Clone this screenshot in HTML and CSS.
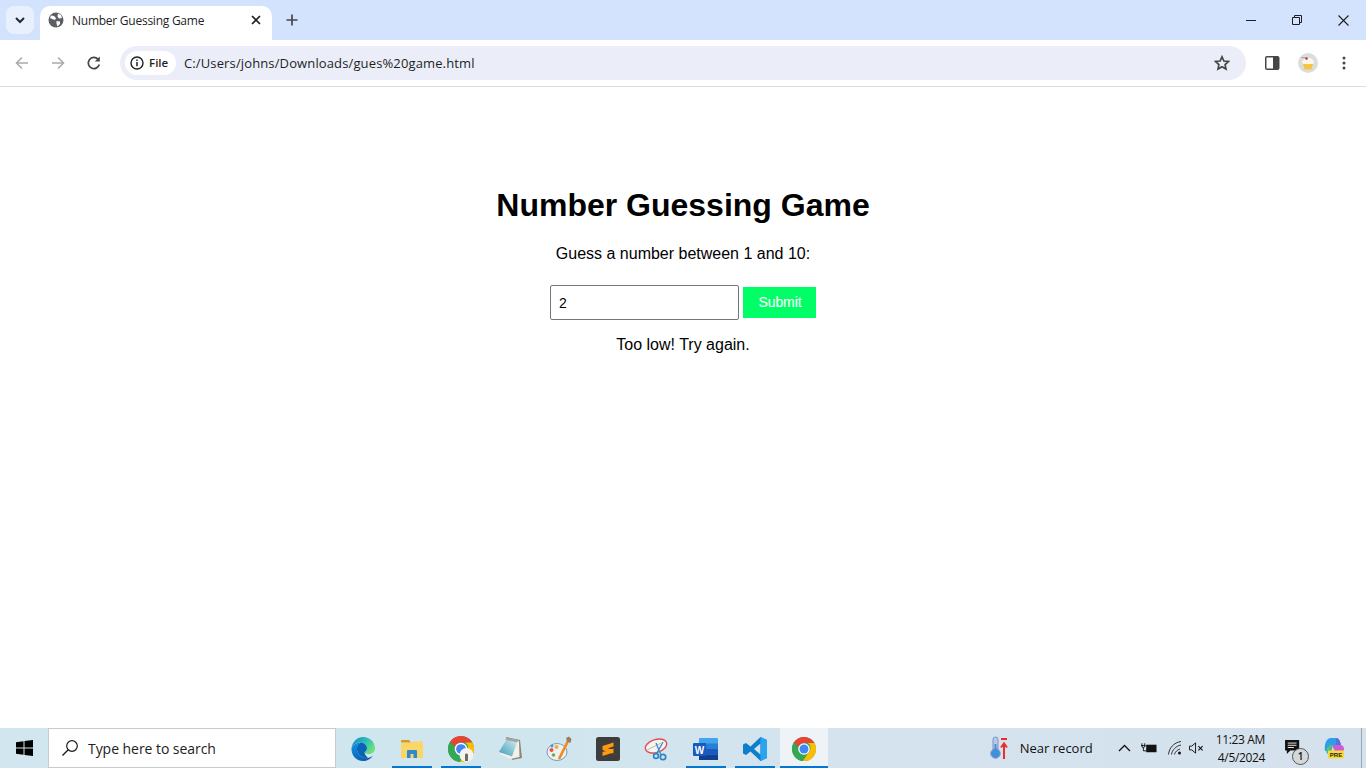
FILE: index.html
```html
<!DOCTYPE html>
<html lang="en">
<head>
<meta charset="utf-8">
<title>Number Guessing Game</title>
<link rel="stylesheet" href="styles.css">
</head>
<body>
<header class="chrome">
  <div class="tabstrip">
    <button class="tabsearch"><svg width="12" height="12" viewBox="0 0 12 12"><path d="M2 4l4 4 4-4" fill="none" stroke="#1f2a3a" stroke-width="2"/></svg></button>
    <div class="tab">
      <svg class="favicon" width="16" height="16" viewBox="0 0 16 16"><circle cx="8" cy="8" r="7.500" fill="#5b5e63"/><path d="M3 3.500l3 .5 2 2-1 2-3-1-2-1zM10 1.500l3 1.500 1 3-3 .5-1.500-2zM8.500 9l3.500 .5 0 2.500-2.500 2.500-1-3z" fill="#fff"/></svg>
      <span class="tabtitle">Number Guessing Game</span>
      <svg class="tabclose" width="10" height="10" viewBox="0 0 10 10"><path d="M1 1l8 8M9 1l-8 8" stroke="#202124" stroke-width="1.700"/></svg>
    </div>
    <svg class="newtab" width="12" height="12" viewBox="0 0 12 12"><path d="M6 .5v11M.5 6h11" stroke="#444746" stroke-width="1.700"/></svg>
    <div class="wincontrols">
      <svg width="10" height="10" viewBox="0 0 10 10"><path d="M0 5.500h10" stroke="#1f1f1f"/></svg>
      <svg width="10" height="10" viewBox="0 0 10 10"><path d="M.5 2.500h7v7h-7zM2.500 2.500v-2h7v7h-2" fill="none" stroke="#1f1f1f"/></svg>
      <svg width="11" height="11" viewBox="0 0 11 11"><path d="M.5 .5l10 10M10.500 .5l-10 10" stroke="#1f1f1f" stroke-width="1.100"/></svg>
    </div>
  </div>
  <div class="toolbar">
    <div class="navs">
      <svg width="16" height="16" viewBox="0 0 16 16"><path d="M14 8H3M8 2.500L2.500 8 8 13.500" fill="none" stroke="#a9abad" stroke-width="1.600"/></svg>
      <svg width="16" height="16" viewBox="0 0 16 16"><path d="M2 8h11M8 2.500L13.500 8 8 13.500" fill="none" stroke="#a9abad" stroke-width="1.600"/></svg>
      <svg width="16" height="16" viewBox="0 0 16 16"><path d="M13.300 9.500A5.600 5.600 0 1 1 12 4.200" fill="none" stroke="#444746" stroke-width="1.700"/><path d="M13.800 1.500v5h-5z" fill="#444746"/></svg>
    </div>
    <div class="omnibox">
      <div class="chip">
        <svg width="14" height="14" viewBox="0 0 14 14"><circle cx="7" cy="7" r="6" fill="none" stroke="#202124" stroke-width="1.400"/><path d="M7 6v4.200M7 3.500v1.500" stroke="#202124" stroke-width="1.500"/></svg>
        <span>File</span>
      </div>
      <span class="url">C:/Users/johns/Downloads/gues%20game.html</span>
      <svg class="star" width="16" height="16" viewBox="0 0 16 16"><path d="M8 1.800l1.900 4.200 4.600.5-3.400 3.100.9 4.500L8 11.800l-4 2.300.9-4.500L1.500 6.500 6.100 6z" fill="none" stroke="#444746" stroke-width="1.700"/></svg>
    </div>
    <div class="tools">
      <svg width="16" height="16" viewBox="0 0 16 16"><rect x="1" y="1" width="14.500" height="14" rx="2" fill="#444746"/><rect x="2.500" y="2.500" width="6.500" height="11" fill="#fff"/></svg>
      <svg class="avatar" width="20" height="20" viewBox="0 0 20 20"><circle cx="10" cy="10" r="10" fill="#dcdcdc"/><path d="M5 11h10l-1.500 5.500h-7z" fill="#f4c445"/><path d="M4 10c0-3 2.500-5 6-5s6 2 6 5c0 1.500-12 1.500-12 0z" fill="#fbf6e6"/><circle cx="8.500" cy="5.500" r="1.200" fill="#b3263a"/><path d="M3.500 4.500l4 .5" stroke="#777" stroke-width=".6"/></svg>
      <svg class="menu" width="4" height="14" viewBox="0 0 4 14"><circle cx="2" cy="2" r="1.500" fill="#444746"/><circle cx="2" cy="7" r="1.500" fill="#444746"/><circle cx="2" cy="12" r="1.500" fill="#444746"/></svg>
    </div>
  </div>
</header>

<main class="page">
  <h1>Number Guessing Game</h1>
  <p class="prompt">Guess a number between 1 and 10:</p>
  <form class="guess">
    <input class="guess-input" type="text" value="2">
    <button class="guess-submit" type="button">Submit</button>
  </form>
  <p class="result">Too low! Try again.</p>
</main>

<footer class="taskbar">
  <svg class="start" width="17" height="16" viewBox="0 0 17 16"><path d="M0 2.300L7.500 1.200v6.300H0zM8.500 1L17 0v7.500H8.500zM0 8.500h7.500v6.300L0 13.700zM8.500 8.500H17V16l-8.500-1.100z" fill="#000"/></svg>
  <div class="search">
    <svg width="18" height="18" viewBox="0 0 18 18"><circle cx="11" cy="7" r="5.300" fill="none" stroke="#1a1a1a" stroke-width="1.200"/><path d="M7.200 10.800L1.500 16.500" stroke="#1a1a1a" stroke-width="1.300"/></svg>
    <span>Type here to search</span>
  </div>
  <div class="apps">
    <div class="app">
      <svg width="24" height="24" viewBox="0 0 24 24"><defs><linearGradient id="edgeTop" x1="0" y1="0" x2="1" y2=".6"><stop offset="0" stop-color="#0f7fc6"/><stop offset=".55" stop-color="#2cc0b8"/><stop offset="1" stop-color="#6fe07a"/></linearGradient><linearGradient id="edgeLow" x1="0" y1="0" x2=".7" y2="1"><stop offset="0" stop-color="#1192e3"/><stop offset="1" stop-color="#0a5bb0"/></linearGradient></defs><path d="M.5 11C1.500 4.500 6.500 0 12 0c7 0 12 5 12 11.500 0 3.500-3 5.500-6.500 5.500-2.500 0-4-1-4-2 1.500-.5 2.500-2 2.500-4 0-3-3-5.500-6.500-5.500-4 0-7.500 2.500-9 5.500z" fill="url(#edgeTop)"/><path d="M.5 11C2 8 5.500 5.500 9.500 5.500 6.500 7 5.500 10 6 13c1 5.500 6 9 11 8 2-.4 3.500-1.200 5-2.500-2 3.500-6 5.500-10 5.500C5 24 0 18 .5 11z" fill="url(#edgeLow)"/><path d="M9.500 5.500c3.500 0 6.500 2.500 6.500 5.500 0 2-1 3.500-2.500 4 0 2 1.500 4 3.500 6-5 1-10-2.500-11-8-.5-3 .5-6 3.500-7.500z" fill="#0b63b5"/></svg>
    </div>
    <div class="app active-line">
      <svg width="22" height="20" viewBox="0 0 22 20"><path d="M0 2a1 1 0 0 1 1-1h7l2 2.500H0z" fill="#d79a1e"/><path d="M0 4h10l2-1.500h9a1 1 0 0 1 1 1V18a1 1 0 0 1-1 1H1a1 1 0 0 1-1-1z" fill="#fbd566"/><path d="M6 19v-7a1 1 0 0 1 1-1h8a1 1 0 0 1 1 1v7h-3.500v-4h-3v4z" fill="#2c8ad0"/></svg>
    </div>
    <div class="app active-line">
      <svg class="chrome-logo" width="26" height="26" viewBox="0 0 26 26"><use href="#chromeIcon"/><circle cx="18.500" cy="19" r="7" fill="#f4f2ee"/><path d="M17 25v-6c0-2 3-2 3 0v6z" fill="#6f6a62"/></svg>
    </div>
    <div class="app">
      <svg width="24" height="23" viewBox="0 0 24 23"><defs><linearGradient id="padBlue" x1="0" y1="1" x2="1" y2="0"><stop offset="0" stop-color="#3f9cb8"/><stop offset="1" stop-color="#cfe9ef"/></linearGradient></defs><path d="M8 0l14 3 2 18-10 2z" fill="#8a8776"/><path d="M8 1l13 3 .5 16-9 2-11-5z" fill="#f2f0ea"/><path d="M8 3l11 2.500-5 14L1 15z" fill="url(#padBlue)"/><path d="M8 .5l12 2.500-.5 2.500L7.500 3z" fill="#a2a6a6"/></svg>
    </div>
    <div class="app">
      <svg width="26" height="26" viewBox="0 0 26 26"><ellipse cx="11" cy="16" rx="10" ry="8.500" fill="#eef0f2" stroke="#7c9bb8"/><circle cx="5.500" cy="14" r="2" fill="#e2574c"/><circle cx="7.500" cy="19" r="1.800" fill="#6cb24a"/><circle cx="10.500" cy="11" r="2" fill="#f2b134"/><circle cx="6" cy="10" r="1.500" fill="#4a90d9"/><path d="M22 5L13 23" stroke="#ef8a1f" stroke-width="2.600"/><path d="M20 2l3-1.500 2.500 2.500-1 4-3.500-1.500z" fill="#9a7e5e"/></svg>
    </div>
    <div class="app">
      <svg width="24" height="24" viewBox="0 0 24 24"><rect width="24" height="24" rx="2.500" fill="#3d3d3b"/><path d="M6.500 9l11-3.500v4L6.500 13zM6.500 9.500l11 3.500v3.500L6.500 13zM6.500 15l11-3.500v4L6.500 19z" fill="#fd9a12"/></svg>
    </div>
    <div class="app">
      <svg width="26" height="24" viewBox="0 0 26 24"><ellipse cx="12" cy="9" rx="11" ry="6.500" transform="rotate(-18 12 9)" fill="#f7f4f4" stroke="#e04f4f" stroke-width="1.400"/><path d="M3 13l14-7" stroke="#bcb8b8"/><path d="M12 6l5 12M19 5l-6 11" stroke="#3d8fcf" stroke-width="1.400"/><circle cx="19" cy="20" r="2.700" fill="none" stroke="#2f84c6" stroke-width="1.700"/><circle cx="12" cy="19" r="2.400" fill="none" stroke="#2f84c6" stroke-width="1.700"/></svg>
    </div>
    <div class="app active-line">
      <svg width="26" height="24" viewBox="0 0 26 24"><rect x="6" y="1" width="19" height="22" rx="1" fill="#41a5ee"/><rect x="6" y="6.500" width="19" height="5.500" fill="#2b7cd3"/><rect x="6" y="12" width="19" height="5.500" fill="#185abd"/><rect x="6" y="17.500" width="19" height="5.500" fill="#103f91"/><rect x="0" y="6" width="13" height="13" rx="1" fill="#185abd"/><text class="word-w" x="6.500" y="16.500">W</text></svg>
    </div>
    <div class="app active-line">
      <svg width="24" height="24" viewBox="0 0 24 24"><path d="M17.500 0L24 3v18l-6.500 3-10-9.500L3 18l-3-1.500V7.500L3 6l4.500 3.500zM17.500 6.500L11 12l6.500 5.500z" fill="#0f7ecb"/><path d="M17.500 0L24 3v18l-6.500 3z" fill="#2aa4ef"/></svg>
    </div>
    <div class="app current">
      <svg width="24" height="24" viewBox="0 0 24 24"><defs><symbol id="chromeIcon" viewBox="0 0 24 24"><circle cx="12" cy="12" r="12" fill="#34a853"/><path d="M12 0a12 12 0 0 1 10.400 6H12a6 6 0 0 0-5.600 3.800L1.800 5.600A12 12 0 0 1 12 0z" fill="#ea4335"/><path d="M22.400 6A12 12 0 0 1 11 24l5.400-8.500A6 6 0 0 0 16 6z" fill="#fbbc04"/><path d="M1.800 5.600l5 8.800L11 24A12 12 0 0 1 0 12c0-2.400.6-4.500 1.800-6.400z" fill="#34a853"/><circle cx="12" cy="12" r="5.800" fill="#fff"/><circle cx="12" cy="12" r="4.500" fill="#4285f4"/></symbol></defs><use href="#chromeIcon"/></svg>
    </div>
  </div>
  <div class="tray">
    <div class="weather">
      <svg width="20" height="24" viewBox="0 0 20 24"><rect x="4" y="1" width="5" height="15" rx="2.500" fill="#b9c9e6" stroke="#7d93c4"/><circle cx="6.500" cy="17.500" r="4.700" fill="#3f8fdc" stroke="#7d93c4"/><path d="M6.500 8v9" stroke="#3f8fdc" stroke-width="2"/><path d="M15 23V8M12 11.500L15 7.500l3 4M12 3h6" fill="none" stroke="#ee2b24" stroke-width="2"/></svg>
      <span>Near record</span>
    </div>
    <svg class="tray-chevron" width="13" height="8" viewBox="0 0 13 8"><path d="M1 7l5.500-5.500L12 7" fill="none" stroke="#111" stroke-width="1.300"/></svg>
    <svg class="tray-battery" width="16" height="12" viewBox="0 0 17 12"><path d="M5.500 2.500h11v8h-11z" fill="#111"/><path d="M0 3.500h5M1 1v3a1.500 1.500 0 0 0 3 0V1M2.500 5.500V9h3" fill="none" stroke="#111"/></svg>
    <svg class="tray-wifi" width="14" height="14" viewBox="0 0 14 14"><path d="M.5 13.500C1 7 6 1.500 13 .5M3.500 13.500C4 9 8 5 13 4M6.500 13.500C7 11 9.500 8.500 12 8" fill="none" stroke="#333"/><circle cx="11.500" cy="12" r="1.500" fill="#111"/></svg>
    <svg class="tray-volume" width="15" height="12" viewBox="0 0 16 12"><path d="M.5 4h2.500l4-3.500v11L3 8H.5z" fill="none" stroke="#111"/><path d="M10 4l4.500 4.500M14.500 4L10 8.500" stroke="#111" stroke-width="1.200"/></svg>
    <div class="clock"><span>11:23 AM</span><span>4/5/2024</span></div>
    <div class="notif">
      <svg width="16" height="15" viewBox="0 0 18 17"><path d="M0 0h16v12H6l-4 4v-4H0z" fill="#111"/><path d="M3 3.500h10M3 6h10M3 8.500h7" stroke="#fff"/></svg>
      <span class="badge">1</span>
    </div>
    <svg class="copilot" width="22" height="22" viewBox="0 0 22 22"><path d="M8 1h5c3 0 4 3 5 7H9c-2 0-4 3-5 6H2C1 8 3 1 8 1z" fill="#2f9de8"/><path d="M13 1c3 0 4 3 5 7h-5z" fill="#5b6fe0"/><path d="M9 8h8c3 0 4 2 4 4 0 3-3 5-5 5h-3z" fill="#d05bd0"/><path d="M3 12c2-4 5-4 7-4l-2 9H5c-1 0-2-2-2-5z" fill="#49c08a"/><rect x="5" y="13.500" width="16" height="8" fill="#f8d93a"/><text class="pre" x="13" y="20">PRE</text></svg>
    <span class="show-desktop"></span>
  </div>
</footer>
</body>
</html>
```
FILE: styles.css
```css
* { box-sizing: border-box; }
html, body { height: 100%; margin: 0; }
body {
  display: flex;
  flex-direction: column;
  height: 768px;
  overflow: hidden;
  background: #fff;
  color: #000;
  font-family: "Liberation Sans", Arial, sans-serif;
}
svg { display: block; flex: none; }

.chrome { flex: none; height: 87px; border-bottom: 1px solid #dadce0; }
.tabstrip {
  display: flex;
  align-items: center;
  height: 40px;
  background: #d3e3fd;
  padding: 6px 0 0 6px;
}
.tabsearch {
  display: flex;
  align-items: center;
  justify-content: center;
  width: 28px;
  height: 28px;
  margin-top: -6px;
  border: 0;
  padding: 0;
  border-radius: 8px;
  background: #e9f0fd;
}
.tab {
  display: flex;
  align-items: center;
  width: 232px;
  height: 34px;
  margin-left: 6px;
  padding: 0 11px 6px 8px;
  border-radius: 10px 10px 0 0;
  background: #fff;
  font-family: "Open Sans", sans-serif;
  font-size: 12px;
  color: #1f1f1f;
}
.favicon { margin-right: 8px; }
.tabtitle { flex: 1; white-space: nowrap; letter-spacing: -.25px; }
.newtab { margin: -6px 0 0 14px; }
.wincontrols {
  display: flex;
  align-items: center;
  gap: 36px;
  margin: -6px 0 0 auto;
  padding-right: 17px;
}

.toolbar {
  display: flex;
  align-items: center;
  height: 46px;
  background: #fff;
  border-radius: 8px 8px 0 0;
  padding-left: 14px;
}
.navs { display: flex; align-items: center; gap: 20px; }
.omnibox {
  display: flex;
  align-items: center;
  width: 1126px;
  height: 34px;
  margin-left: 18px;
  padding: 0 16px 0 5px;
  border-radius: 17px;
  background: #ebeef8;
  font-family: "Open Sans", sans-serif;
  font-size: 13px;
  color: #1f1f1f;
}
.chip {
  display: flex;
  align-items: center;
  gap: 5px;
  width: 51px;
  height: 24px;
  padding-left: 5px;
  border-radius: 12px;
  background: #fff;
  font-size: 11.500px;
  font-weight: 600;
  line-height: 1;
}
.url { flex: 1; margin-left: 8px; white-space: nowrap; letter-spacing: .13px; }
.tools { display: flex; align-items: center; margin-left: 18px; gap: 18px; }
.menu { margin-left: 6px; }

.page { flex: 1; min-height: 0; text-align: center; padding-top: 100px; }
h1 { margin: 0 0 21px; font-size: 32px; line-height: 37px; font-weight: 700; }
.prompt { margin: 0; font-size: 16px; line-height: 18px; }
.guess {
  display: flex;
  align-items: center;
  justify-content: center;
  gap: 4px;
  margin-top: 22px;
}
.guess-input {
  width: 189px;
  height: 35px;
  padding: 0 8px;
  border: 1px solid #767676;
  border-radius: 2px;
  font-family: "Liberation Sans", sans-serif;
  font-size: 14px;
  color: #000;
  background: #fff;
}
.guess-submit {
  width: 73px;
  height: 31px;
  border: 0;
  padding: 0 0 2px 1px;
  background: #00ff66;
  color: #fff;
  font-family: "Liberation Sans", sans-serif;
  font-size: 14px;
  font-weight: 400;
  letter-spacing: -.1px;
  -webkit-text-stroke: .1px #fff;
}
.result { margin: 16px 0 0; font-size: 16px; line-height: 18px; }

.taskbar {
  flex: none;
  display: flex;
  align-items: center;
  height: 40px;
  padding-left: 16px;
  background: linear-gradient(90deg, #d1e6ee 0%, #d0e6ee 40%, #d4e3ee 60%, #d5e2ee 100%);
  font-family: "Open Sans", sans-serif;
  color: #111;
}
.start { margin-right: 15px; }
.search {
  display: flex;
  align-items: center;
  gap: 9px;
  width: 288px;
  height: 40px;
  padding-left: 12px;
  background: #fff;
  border: 1px solid #c5ccd0;
  font-size: 14px;
  letter-spacing: -.05px;
  color: #222;
}
.apps { display: flex; align-items: stretch; height: 40px; margin-left: 2.500px; }
.app {
  display: flex;
  align-items: center;
  justify-content: center;
  width: 49px;
  height: 40px;
  padding-top: 1px;
}
.active-line { box-shadow: inset 0 -2px 0 #0078d4; margin: 0 4.500px; width: 40px; }
.current { background: #edf3f7; box-shadow: inset 0 -2px 0 #0078d4; margin: 0 .5px; width: 48px; }
.word-w { font: 700 10px "Liberation Sans", sans-serif; fill: #fff; text-anchor: middle; }
.tray {
  display: flex;
  align-items: center;
  margin-left: auto;
  height: 40px;
}
.weather { display: flex; align-items: center; gap: 11px; font-size: 13px; margin-right: 25px; }
.tray-chevron { margin-right: 10px; }
.tray-battery { margin-right: 11px; }
.tray-wifi { margin-right: 7px; }
.clock {
  display: flex;
  flex-direction: column;
  align-items: flex-end;
  gap: 3px;
  margin-left: 12px;
  font-size: 12px;
  letter-spacing: -.35px;
  line-height: 15px;
  white-space: nowrap;
}
.notif { position: relative; width: 24px; height: 24px; margin: 8px 0 0 20px; }
.badge {
  position: absolute;
  left: 7px;
  top: 8px;
  width: 17px;
  height: 17px;
  border-radius: 50%;
  border: 1.500px solid #555;
  background: #d5d8da;
  font-size: 10px;
  line-height: 14px;
  text-align: center;
  font-weight: 600;
}
.copilot { margin-left: 14px; }
.pre { font: 700 6px "Liberation Sans", sans-serif; fill: #222; text-anchor: middle; }
.show-desktop { width: 1px; height: 40px; margin-left: 16px; margin-right: 4px; background: #9aa6ad; }
```
